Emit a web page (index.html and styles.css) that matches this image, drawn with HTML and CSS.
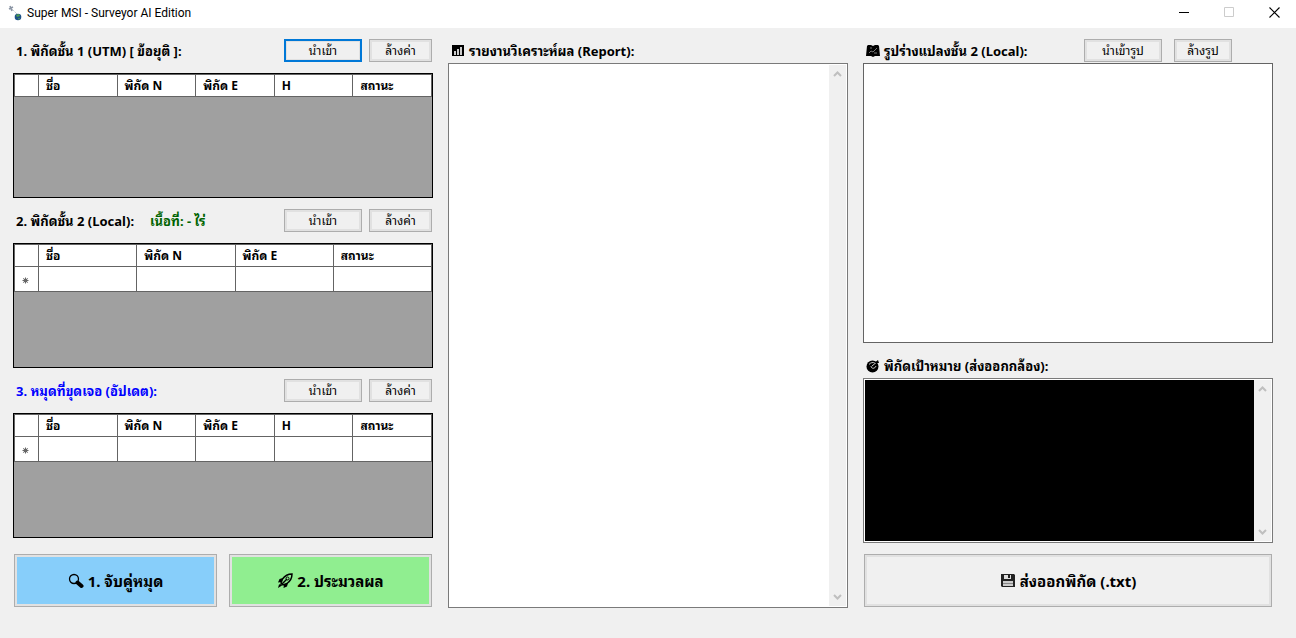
FILE: index.html
```html
<!DOCTYPE html>
<html lang="th">
<head>
  <meta charset="UTF-8" />
  <meta name="viewport" content="width=device-width, initial-scale=1.0" />
  <title>Super MSI - Surveyor AI Edition</title>
  <link rel="stylesheet" href="styles.css">
</head>
<body>
  <header class="titlebar">
    <svg class="app-icon" width="16" height="16" viewBox="0 0 16 16" aria-hidden="true">
      <path d="M1 4l4-2M2 1l2 5" stroke="#8c96a5" stroke-width="1.6" />
      <path d="M4 4l5 5" stroke="#a8b0bb" stroke-dasharray="1 1" />
      <circle cx="10" cy="12" r="3.3" fill="#1d5288" />
      <path d="M8 10l3-1 1 2-3 1zM10 13l2 0-1 2z" fill="#4c9b50" />
    </svg>
    <h1>Super MSI - Surveyor AI Edition</h1>
    <div class="window-buttons">
      <button type="button" aria-label="Minimize"><svg width="11" height="11" viewBox="0 0 11 11"><path d="M0 5.5h10" stroke="#000" /></svg></button>
      <button type="button" aria-label="Maximize" disabled><svg width="11" height="11" viewBox="0 0 11 11"><path d="M.5.5h9v9h-9z" fill="none" stroke="#ccc" /></svg></button>
      <button type="button" aria-label="Close"><svg width="11" height="11" viewBox="0 0 11 11"><path d="M.5.5l10 10M10.5.5l-10 10" stroke="#000" stroke-width="1.1" /></svg></button>
    </div>
  </header>

  <main>
    <section class="column">
      <div class="panel-head">
        <h2>1. พิกัดชั้น 1 (UTM) [ ข้อยุติ ]:</h2>
        <div class="actions">
          <button type="button" class="btn import default">นำเข้า</button>
          <button type="button" class="btn clear">ล้างค่า</button>
        </div>
      </div>
      <div class="grid-view">
        <table>
          <thead>
            <tr><th class="row-head"></th><th>ชื่อ</th><th>พิกัด N</th><th>พิกัด E</th><th>H</th><th>สถานะ</th></tr>
          </thead>
        </table>
      </div>

      <div class="panel-head">
        <h2>2. พิกัดชั้น 2 (Local):</h2>
        <span class="area">เนื้อที่: - ไร่</span>
        <div class="actions">
          <button type="button" class="btn import">นำเข้า</button>
          <button type="button" class="btn clear">ล้างค่า</button>
        </div>
      </div>
      <div class="grid-view">
        <table>
          <thead>
            <tr><th class="row-head"></th><th>ชื่อ</th><th>พิกัด N</th><th>พิกัด E</th><th>สถานะ</th></tr>
          </thead>
          <tbody>
            <tr>
              <td class="row-head"><svg width="7" height="7" viewBox="0 0 7 7"><circle cx="3.5" cy="3.5" r="2" fill="#444" /><path d="M3.5 .5v6M.5 3.5h6M1.3 1.3l4.4 4.4M5.7 1.3L1.3 5.7" stroke="#666" /></svg></td>
              <td></td><td></td><td></td><td></td>
            </tr>
          </tbody>
        </table>
      </div>

      <div class="panel-head">
        <h2 class="found">3. หมุดที่ขุดเจอ (อัปเดต):</h2>
        <div class="actions">
          <button type="button" class="btn import">นำเข้า</button>
          <button type="button" class="btn clear">ล้างค่า</button>
        </div>
      </div>
      <div class="grid-view">
        <table>
          <thead>
            <tr><th class="row-head"></th><th>ชื่อ</th><th>พิกัด N</th><th>พิกัด E</th><th>H</th><th>สถานะ</th></tr>
          </thead>
          <tbody>
            <tr>
              <td class="row-head"><svg width="7" height="7" viewBox="0 0 7 7"><circle cx="3.5" cy="3.5" r="2" fill="#444" /><path d="M3.5 .5v6M.5 3.5h6M1.3 1.3l4.4 4.4M5.7 1.3L1.3 5.7" stroke="#666" /></svg></td>
              <td></td><td></td><td></td><td></td><td></td>
            </tr>
          </tbody>
        </table>
      </div>

      <div class="run-buttons">
        <button type="button" class="btn big match">
          <svg width="16" height="16" viewBox="0 0 16 16" aria-hidden="true">
            <circle cx="6" cy="6" r="4.5" fill="none" stroke="#000" stroke-width="1.3" />
            <path d="M9.5 9.5l4 3.500" stroke="#000" stroke-width="4" stroke-linecap="round" />
          </svg>
          1. จับคู่หมุด
        </button>
        <button type="button" class="btn big process">
          <svg width="16" height="16" viewBox="0 0 16 16" aria-hidden="true">
            <path d="M15 1c-4 0-7 1.500-9.500 5L4 10l2 2 4-1.500C13.500 8 15 5 15 1z" fill="none" stroke="#000" stroke-width="1.5" />
            <path d="M6 5L2.500 6 1 9.500l3.500-.5zM11 10l-1 3.500L6.500 15l.5-3.500zM1 15l1-3.500 2.500-.5.5 1.500z" fill="#000" />
            <path d="M5 11l5-5" stroke="#000" stroke-width="1.5" />
            <circle cx="10.5" cy="5.5" r="1.5" fill="none" stroke="#000" />
          </svg>
          2. ประมวลผล
        </button>
      </div>
    </section>

    <section class="column">
      <div class="panel-head short">
        <svg width="14" height="14" viewBox="0 0 14 14" aria-hidden="true">
          <path d="M1 1h12v11H1z" fill="#000" />
          <path d="M4 7v4M7 5v6M10 3v8" stroke="#fff" stroke-width="1.6" />
        </svg>
        <h2><label for="report">รายงานวิเคราะห์ผล (Report):</label></h2>
      </div>
      <div class="textbox">
        <textarea id="report" spellcheck="false"></textarea>
        <div class="scrollbar" aria-hidden="true">
          <svg width="9" height="6" viewBox="0 0 9 6"><path d="M1 5l3.500-3.500L8 5" /></svg>
          <svg width="9" height="6" viewBox="0 0 9 6"><path d="M1 1l3.500 3.500L8 1" /></svg>
        </div>
      </div>
    </section>

    <section class="column">
      <div class="panel-head short">
        <svg width="14" height="14" viewBox="0 0 14 14" aria-hidden="true">
          <path d="M1 2l1-1h3l2 1 2-1h3l1 1 1 10H9l-2 1-2-1H0z" fill="#000" />
          <path d="M3 9l2-2 2 1 4-4M4 4h2M8 9h3" fill="none" stroke="#aaa" stroke-width=".7" />
        </svg>
        <h2>รูปร่างแปลงชั้น 2 (Local):</h2>
        <div class="actions picture">
          <button type="button" class="btn import">นำเข้ารูป</button>
          <button type="button" class="btn clear">ล้างรูป</button>
        </div>
      </div>
      <div class="picture-box"></div>

      <div class="panel-head short">
        <svg width="14" height="14" viewBox="0 0 14 14" aria-hidden="true">
          <circle cx="6.5" cy="7.500" r="6" fill="#000" />
          <path d="M3 5.500c1.500-2 4-2.500 6-1.500M5 7c0 3 4 3 5 0M6 7l6-5" fill="none" stroke="#ddd" stroke-width=".9" />
          <path d="M8 4l4-3 1 3z" fill="#000" />
        </svg>
        <h2><label for="target">พิกัดเป้าหมาย (ส่งออกกล้อง):</label></h2>
      </div>
      <div class="textbox target">
        <textarea id="target" spellcheck="false"></textarea>
        <div class="scrollbar" aria-hidden="true">
          <svg width="9" height="6" viewBox="0 0 9 6"><path d="M1 5l3.500-3.500L8 5" /></svg>
          <svg width="9" height="6" viewBox="0 0 9 6"><path d="M1 1l3.500 3.500L8 1" /></svg>
        </div>
      </div>
      <div class="run-buttons export">
        <button type="button" class="btn big">
          <svg width="16" height="16" viewBox="0 0 16 16" aria-hidden="true">
            <path d="M1 1h13l1 1v12H2l-1-1z" fill="#222" />
            <path d="M4 2h7v4H4z" fill="#ddd" />
            <path d="M8 2h2v3H8z" fill="#222" />
            <path d="M3 8h10v5H3z" fill="#ccc" />
            <path d="M3 10.5h10" stroke="#888" />
          </svg>
          ส่งออกพิกัด (.txt)
        </button>
      </div>
    </section>
  </main>
</body>
</html>
```
FILE: styles.css
```css
* {
  box-sizing: border-box;
}
body {
  margin: 0;
  min-height: 100vh;
  display: flex;
  flex-direction: column;
  background: #f0f0f0;
  color: #000;
  font-family: "Noto Sans", "Noto Sans Thai Looped", Loma, "Noto Sans Thai", sans-serif;
  font-size: 12px;
}
button, textarea {
  font: inherit;
  color: inherit;
}
svg {
  flex: none;
  display: block;
}

.titlebar {
  height: 28px;
  padding: 0 16px 3px 8px;
  display: flex;
  align-items: center;
  background: #fff;
}
.titlebar h1 {
  margin: 0 0 0 3px;
  font-family: Roboto, sans-serif;
  font-size: 12px;
  font-weight: normal;
}
.window-buttons {
  margin-left: auto;
  display: flex;
  gap: 34px;
}
.window-buttons button {
  padding: 0;
  border: none;
  background: none;
}

main {
  flex: 1;
  display: grid;
  grid-template-columns: 420fr 400fr 410fr;
  gap: 15px;
  padding: 0 23px 30px 13px;
}
.column {
  display: flex;
  flex-direction: column;
  min-width: 0;
}

.panel-head {
  height: 45px;
  padding: 0 1px 0 3px;
  display: flex;
  align-items: center;
}
.panel-head.short {
  height: 35px;
  padding-top: 10px;
}
.panel-head h2 {
  margin: 0;
  font-size: 13px;
  line-height: 20px;
  white-space: nowrap;
}
.panel-head svg + h2 {
  margin-left: 4px;
}
.panel-head .found {
  color: #0000ff;
}
.area {
  margin-left: 16px;
  font-size: 13px;
  font-weight: bold;
  color: #006400;
}
.actions {
  margin-left: auto;
  display: flex;
  gap: 7px;
}
.actions.picture {
  margin-right: 40px;
  gap: 12px;
}

.btn {
  height: 23px;
  padding: 0;
  border: 1px solid #adadad;
  background: #f0f0f0;
  box-shadow: inset 0 0 0 2px #e1e1e1;
  line-height: 16px;
}
.btn.default {
  border: 2px solid #0078d7;
  box-shadow: inset 0 0 0 1px #e1e1e1;
}
.import {
  width: 78px;
}
.clear {
  width: 63px;
}
.picture .clear {
  width: 58px;
}

.grid-view {
  flex: 1;
  min-height: 125px;
  border: 1px solid #000;
  background: #a0a0a0;
}
table {
  width: 100%;
  table-layout: fixed;
  border-collapse: separate;
  border-spacing: 0;
  border: solid #646464;
  border-width: 1px 0 0 1px;
}
th, td {
  height: 25px;
  padding: 0 0 0 7px;
  border: solid #646464;
  border-width: 0 1px 1px 0;
  background: #fff;
  text-align: left;
}
th {
  height: 22px;
  line-height: 20px;
}
td {
  padding-top: 3px;
}
.row-head {
  width: 24px;
}

.run-buttons {
  margin: 16px 1px 1px;
  display: flex;
  gap: 12px;
}
.run-buttons.export {
  margin-top: 11px;
}
.big {
  flex: 1;
  height: 53px;
  display: flex;
  align-items: center;
  justify-content: center;
  gap: 4px;
  font-size: 15px;
  font-weight: bold;
}
.match {
  background: #87cefa;
}
.process {
  background: #90ee90;
}

.textbox {
  flex: 1;
  display: flex;
  padding: 1px;
  border: 1px solid #7a7a7a;
  background: #fff;
}
.textbox textarea {
  flex: 1;
  min-width: 0;
  border: none;
  outline: none;
  resize: none;
  background: #fff;
}
.textbox.target {
  flex: 165 1 165px;
}
.target textarea {
  background: #000;
  color: #00ff00;
}
.scrollbar {
  width: 17px;
  padding: 6px 0;
  display: flex;
  flex-direction: column;
  align-items: center;
  justify-content: space-between;
  background: #f0f0f0;
}
.scrollbar path {
  fill: none;
  stroke: #bfbfbf;
  stroke-width: 2;
}
.picture-box {
  flex: 280 1 280px;
  border: 1px solid #646464;
  background: #fff;
}
```
